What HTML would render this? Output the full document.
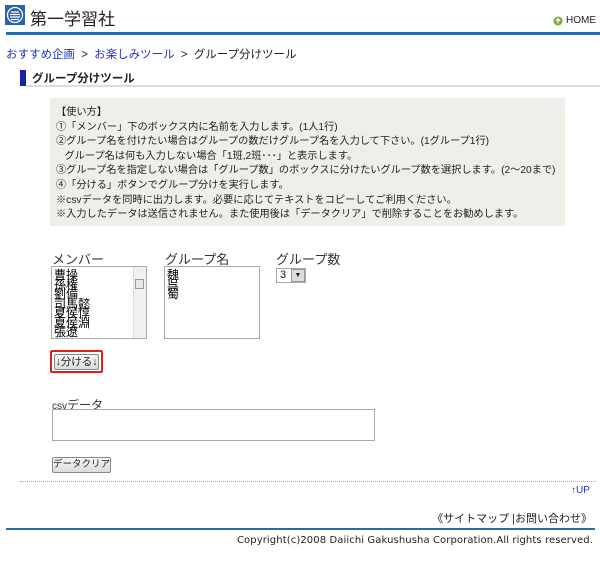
<!DOCTYPE html>
<html><head><meta charset="utf-8"><style>
*{margin:0;padding:0;box-sizing:border-box}
body{width:600px;height:562px;background:#fff;font-family:"Liberation Sans","Noto Sans CJK JP",sans-serif;font-size:12px;color:#222;position:relative;overflow:hidden}
.a{position:absolute;white-space:nowrap}
a{color:#2233cc;text-decoration:none}
textarea{position:absolute;border:1px solid #aaa;resize:none;background:#fff;font-family:"Noto Sans CJK JP",sans-serif;font-size:12px;line-height:9.5px;padding:3px 2px;overflow:hidden}
.btn{position:absolute;white-space:nowrap;border:1px solid #888;background:linear-gradient(#f6f6f6,#dcdcdc);font-size:10.5px;text-align:center;line-height:14px;border-radius:2px;overflow:hidden}
</style></head><body>
<svg class="a" style="left:5px;top:5px" width="20" height="20" viewBox="0 0 20 20"><rect width="20" height="20" fill="#2a63a8"/><circle cx="10" cy="10" r="7.5" fill="none" stroke="#fff" stroke-width="1.3"/><path d="M6 7h8M5 9.5h10M5 12h10M6 14.5h8" stroke="#fff" stroke-width="1.2"/></svg>
<div class="a" style="left:30px;top:5px;font-size:17px;color:#222">第一学習社</div>
<svg class="a" style="left:553px;top:16px" width="10" height="10"><circle cx="5" cy="5" r="4.5" fill="#7aa83a"/><path d="M5 2.5v5M3 5l2-2.5 2 2.5" stroke="#fff" stroke-width="1.2" fill="none"/></svg>
<div class="a" style="left:566px;top:15px;font-size:10px;color:#222">HOME</div>
<div class="a" style="left:6px;top:32px;width:594px;height:3px;background:#2a6aaa"></div>
<div class="a" style="left:6px;top:46px;font-size:11.5px;word-spacing:3px"><a>おすすめ企画</a> &gt; <a>お楽しみツール</a> &gt; グループ分けツール</div>
<div class="a" style="left:20px;top:70px;width:6px;height:16px;background:#1a22a0"></div>
<div class="a" style="left:32px;top:70px;font-size:11.5px;font-weight:bold">グループ分けツール</div>
<div class="a" style="left:26px;top:85px;width:574px;height:2px;background:#ddd"></div>
<div class="a" style="left:50px;top:98px;width:515px;height:128px;background:#efeee8"></div>
<div class="a" style="left:56px;top:106px;font-size:10.2px;line-height:14.6px">【使い方】<br>①「メンバー」下のボックス内に名前を入力します。(1人1行)<br>②グループ名を付けたい場合はグループの数だけグループ名を入力して下さい。(1グループ1行)<br>&nbsp;&nbsp;&nbsp;グループ名は何も入力しない場合「1班,2班･･･」と表示します。<br>③グループ名を指定しない場合は「グループ数」のボックスに分けたいグループ数を選択します。(2～20まで)<br>④「分ける」ボタンでグループ分けを実行します。<br>※csvデータを同時に出力します。必要に応じてテキストをコピーしてご利用ください。<br>※入力したデータは送信されません。また使用後は「データクリア」で削除することをお勧めします。</div>
<div class="a" style="left:52px;top:249px;font-size:13px;color:#333">メンバー</div>
<div class="a" style="left:165px;top:249px;font-size:13px;color:#333">グループ名</div>
<div class="a" style="left:276px;top:249px;font-size:13px;color:#333">グループ数</div>
<textarea style="left:51px;top:266px;width:96px;height:73px">曹操
孫権
劉備
司馬懿
夏侯惇
夏侯淵
張遼
</textarea>
<div class="a" style="left:133px;top:267px;width:13px;height:71px;background:#f0f0f0;border-left:1px solid #ddd"></div>
<div class="a" style="left:135px;top:279px;width:9px;height:10px;border:1px solid #999;background:#e8e8e8"></div>
<textarea style="left:164px;top:266px;width:96px;height:73px">魏
呉
蜀</textarea>
<div class="a" style="left:276px;top:268px;width:30px;height:15px;border:1px solid #aaa;font-size:11px;padding-left:3px;line-height:13px">3</div>
<div class="a" style="left:291px;top:269px;width:14px;height:13px;background:#ddd;border:1px solid #999;font-size:7px;text-align:center;line-height:11px">▼</div>
<div class="a" style="left:50px;top:350px;width:53px;height:23px;border:2px solid #e0201a;border-radius:2px"></div>
<div class="btn" style="left:54px;top:354px;width:45px;height:16px">↓分ける↓</div>
<div class="a" style="left:52px;top:396px;font-size:12px;color:#333"><span style="font-size:10px">csv</span>データ</div>
<textarea style="left:52px;top:409px;width:323px;height:32px"></textarea>
<div class="btn" style="left:52px;top:457px;width:59px;height:16px;font-size:9.5px">データクリア</div>
<div class="a" style="left:20px;top:481px;width:576px;border-top:1px dotted #aaa"></div>
<div class="a" style="left:571px;top:485px;font-size:10px"><a>↑UP</a></div>
<div class="a" style="right:8px;top:510px;font-size:11px">《サイトマップ |お問い合わせ》</div>
<div class="a" style="left:6px;top:528px;width:589px;height:2px;background:#2a6aaa"></div>
<div class="a" style="right:7px;top:535px;font-size:10px;font-family:'DejaVu Sans',sans-serif;letter-spacing:0.1px">Copyright(c)2008 Daiichi Gakushusha Corporation.All rights reserved.</div>
</body></html>
